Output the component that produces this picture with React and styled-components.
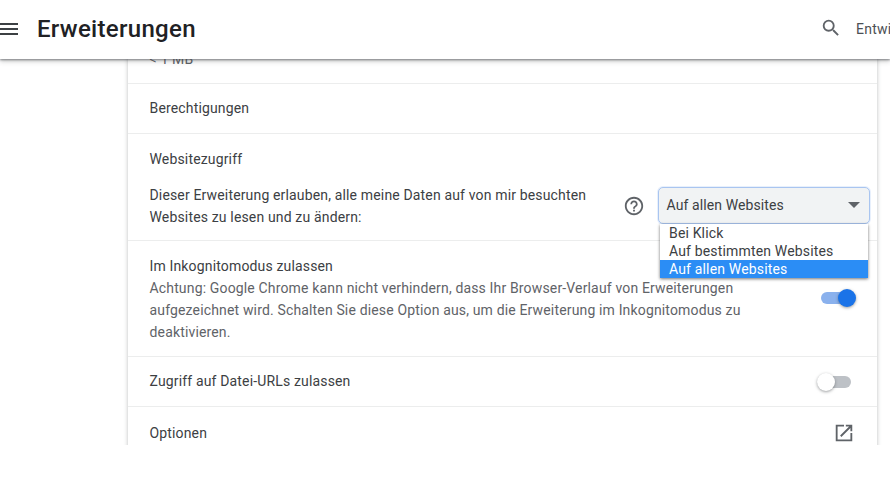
import React from 'react';
import styled, { createGlobalStyle } from 'styled-components';

const Global = createGlobalStyle`
  html, body { margin: 0; padding: 0; background: #fff; }
  body { font-family: Roboto, "Liberation Sans", sans-serif; color: #3c4043; }
`;
const Page = styled.div`
  width: 890px; height: 481px; overflow: hidden; background: #fff;
  display: flex; flex-direction: column;
`;
const Header = styled.header`
  position: relative; z-index: 3; flex: none; height: 59px; background: #fff;
  display: flex; align-items: center; padding-bottom: 1px; box-sizing: border-box;
  box-shadow: 0 1px 2px rgba(60,64,67,.55), 0 2px 5px rgba(60,64,67,.3);
`;
const Menu = styled.svg`
  width: 18px; height: 14px; flex: none; margin-top: -1px;
`;
const Title = styled.h1`
  margin: 0 0 0 19px; font-size: 24px; font-weight: 500; letter-spacing: .3px; color: #202124; line-height: 58px;
`;
const Spacer = styled.div`flex: 1;`;
const SearchIcon = styled.svg`
  width: 22px; height: 22px; flex: none; margin-right: 14px; margin-top: -2px;
`;
const DevLabel = styled.div`
  width: 34px; overflow: hidden; white-space: nowrap; font-size: 14px; color: #4c5054; letter-spacing: .25px;
`;
const Main = styled.main`
  flex: none; height: 386px; overflow: hidden; padding: 0 13px 0 128px;
`;
const Card = styled.section`
  position: relative; background: #fff; margin-top: -20px; height: 420px; letter-spacing: .155px;
  box-shadow: 0 0 4px rgba(60,64,67,.35);
`;
const Row = styled.div`
  display: flex; align-items: center; justify-content: space-between;
  height: ${p => p.$h}px; padding: 0 25px ${p => p.$pb || 0}px 21.5px; box-sizing: border-box;
  border-top: ${p => (p.$first ? 'none' : '1px solid #eceded')};
  font-size: 14px; line-height: 20px; color: #3c4043;
`;
const Muted = styled.span`color: #5f6368;`;
const Block = styled.div`
  height: ${p => p.$h}px; padding: ${p => p.$pt}px 25px 0 21.5px; box-sizing: border-box;
  border-top: 1px solid #eceded; font-size: 14px; line-height: 20px; color: #3c4043;
`;
const AccessRow = styled.div`
  display: flex; align-items: center; margin-top: 15px; position: relative;
`;
const AccessText = styled.div`width: 475px; flex: none; line-height: 22px;`;
const Help = styled.svg`
  width: 22px; height: 22px; flex: none; margin: -1px 13px 0 -2px;
`;
const SelectBox = styled.div`
  position: relative; width: 212px; height: 37px; box-sizing: border-box; flex: none; margin-top: -2px;
  background: #f1f3f4; border: 1.5px solid #a9c5f0; border-radius: 5px;
  padding-left: 8px; display: flex; align-items: center; justify-content: space-between;
  color: #3c4043; font-size: 14px; box-shadow: 0 0 0 1px rgba(180,205,245,.3); letter-spacing: .1px;
`;
const Arrow = styled.i`
  width: 0; height: 0; margin-right: 9px;
  border-left: 6px solid transparent; border-right: 6px solid transparent; border-top: 6px solid #5f6368;
`;
const Dropdown = styled.ul`
  position: absolute; z-index: 2; left: 532px; top: 185px; width: 207.5px; margin: 0; padding: 0;
  list-style: none; background: #fff; box-shadow: 0 1px 3px rgba(0,0,0,.55); font-size: 14px; color: #3c4043;
`;
const Option = styled.li`
  height: 18px; line-height: 18px; padding-left: 9px; letter-spacing: .16px;
  background: ${p => (p.$active ? '#2b8df5' : 'transparent')};
  color: ${p => (p.$active ? '#fff' : '#3c4043')};
`;
const InkRow = styled.div`
  display: flex; align-items: center; justify-content: space-between;
`;
const InkText = styled.div`width: 620px; line-height: 22px; color: #3c4043;`;
const InkDesc = styled.div`color: #5f6368;`;
const Toggle = styled.div`
  position: relative; width: 34px; height: 12px; border-radius: 6px; flex: none;
  margin: ${p => (p.$on ? '0 -3px 2px 0' : '1px 1px 0 0')};
  background: ${p => (p.$on ? '#8ab1ed' : '#bdc1c6')};
  &::after {
    content: ''; position: absolute; top: -3px; width: 18px; height: 18px; border-radius: 50%;
    left: ${p => (p.$on ? '16.5px' : '0')};
    background: ${p => (p.$on ? '#1a73e8' : '#fff')};
    box-shadow: 0 1px 3px rgba(60,64,67,.5);
  }
`;
const External = styled.svg`width: 22px; height: 22px; flex: none; margin-right: -3px;`;

export default function App() {
  return (
    <Page>
      <Global />
      <Header>
        <Menu viewBox="0 0 18 14">
          <path d="M0 1h18v2H0zM0 6h18v2H0zM0 11h18v2H0z" fill="#3c4043" />
        </Menu>
        <Title>Erweiterungen</Title>
        <Spacer />
        <SearchIcon viewBox="0 0 24 24">
          <path fill="#5f6368" d="M15.5 14h-.79l-.28-.27A6.47 6.47 0 0 0 16 9.5 6.5 6.5 0 1 0 9.5 16c1.61 0 3.09-.59 4.23-1.57l.27.28v.79l5 4.99L20.49 19l-4.99-5zm-6 0C7.01 14 5 11.99 5 9.5S7.01 5 9.5 5 14 7.01 14 9.5 11.99 14 9.5 14z" />
        </SearchIcon>
        <DevLabel>Entwicklermodus</DevLabel>
      </Header>
      <Main>
        <Card>
          <Row $h={44} $first $pb={5}><Muted>&lt; 1 MB</Muted></Row>
          <Row $h={50} $pb={2}>Berechtigungen</Row>
          <Block $h={107} $pt={15}>
            Websitezugriff
            <AccessRow>
              <AccessText>Dieser Erweiterung erlauben, alle meine Daten auf von mir besuchten Websites zu lesen und zu ändern:</AccessText>
              <Help viewBox="0 0 24 24">
                <path fill="#5f6368" d="M11 18h2v-2h-2v2zm1-16C6.48 2 2 6.48 2 12s4.48 10 10 10 10-4.48 10-10S17.52 2 12 2zm0 18c-4.41 0-8-3.59-8-8s3.59-8 8-8 8 3.59 8 8-3.59 8-8 8zm0-14c-2.21 0-4 1.79-4 4h2c0-1.1.9-2 2-2s2 .9 2 2c0 2-3 1.75-3 5h2c0-2.25 3-2.5 3-5 0-2.21-1.79-4-4-4z" />
              </Help>
              <SelectBox>Auf allen Websites<Arrow /></SelectBox>
            </AccessRow>
          </Block>
          <Dropdown>
            <Option>Bei Klick</Option>
            <Option>Auf bestimmten Websites</Option>
            <Option $active>Auf allen Websites</Option>
          </Dropdown>
          <Block $h={116} $pt={14}>
            <InkRow>
              <InkText>
                Im Inkognitomodus zulassen
                <InkDesc>Achtung: Google Chrome kann nicht verhindern, dass Ihr Browser-Verlauf von Erweiterungen aufgezeichnet wird. Schalten Sie diese Option aus, um die Erweiterung im Inkognitomodus zu deaktivieren.</InkDesc>
              </InkText>
              <Toggle $on />
            </InkRow>
          </Block>
          <Row $h={50} $pb={1}>Zugriff auf Datei-URLs zulassen<Toggle /></Row>
          <Row $h={53} $pb={0}>
            Optionen
            <External viewBox="0 0 24 24">
              <path fill="#5f6368" d="M19 19H5V5h7V3H3v18h18v-9h-2v7zM14 3v2h3.59l-9.83 9.83 1.41 1.41L19 6.41V10h2V3h-7z" />
            </External>
          </Row>
        </Card>
      </Main>
    </Page>
  );
}
